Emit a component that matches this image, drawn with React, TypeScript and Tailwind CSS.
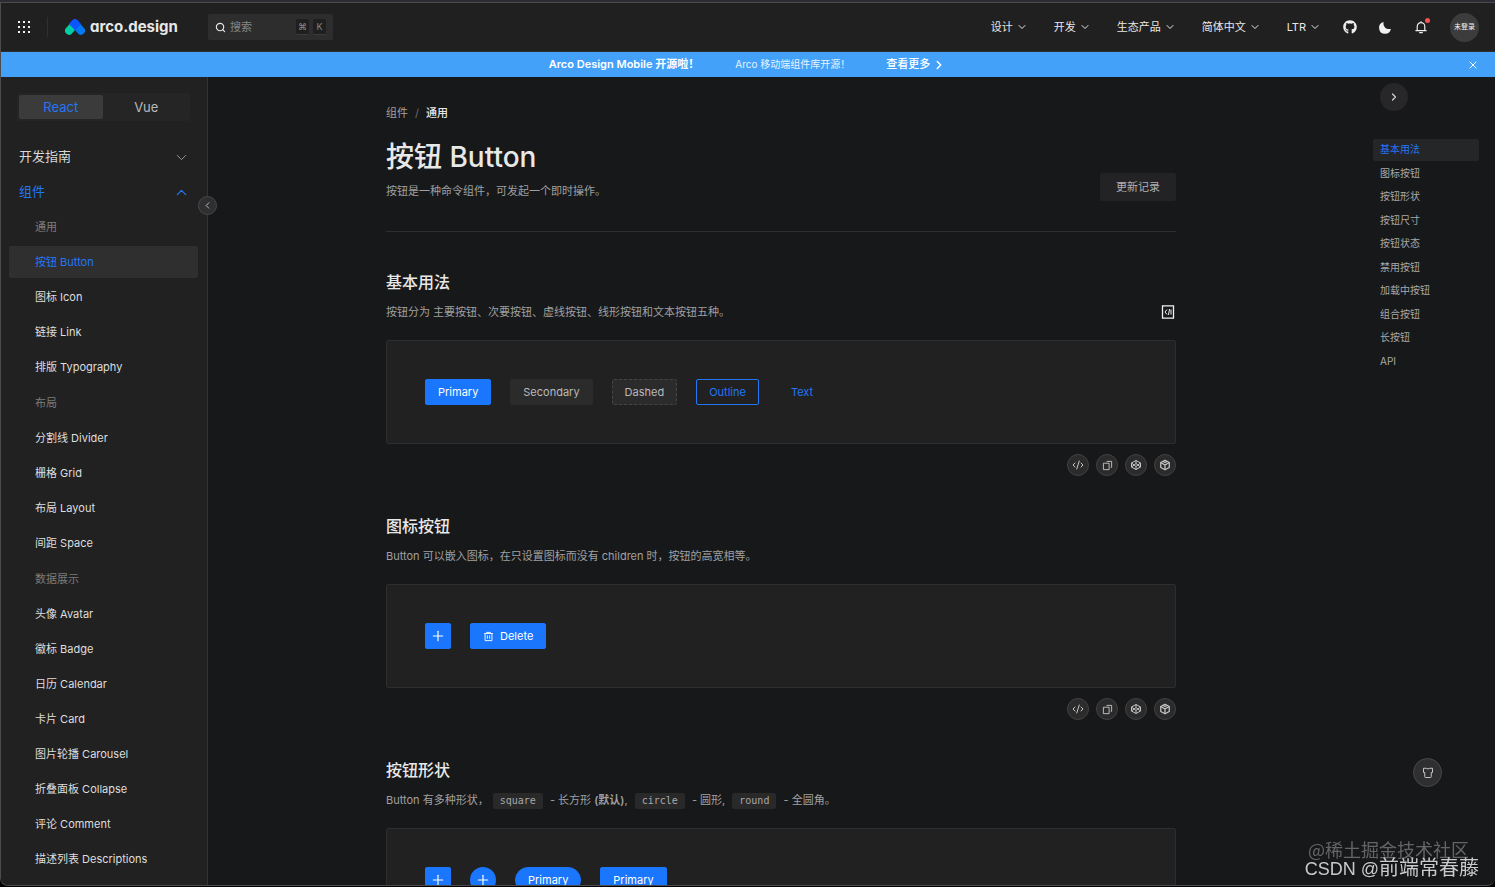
import { useState } from "react";
import type { ReactNode } from "react";
import {
  ChevronDown,
  ChevronLeft,
  ChevronRight,
  ChevronUp,
  CodeXml,
  Plus,
  Search,
  X,
} from "lucide-react";
import { FaGithub } from "react-icons/fa";

const navItems = ["设计", "开发", "生态产品", "简体中文", "LTR"];

const menuGroups = [
  {
    title: "通用",
    items: ["按钮 Button", "图标 Icon", "链接 Link", "排版 Typography"],
  },
  {
    title: "布局",
    items: ["分割线 Divider", "栅格 Grid", "布局 Layout", "间距 Space"],
  },
  {
    title: "数据展示",
    items: [
      "头像 Avatar",
      "徽标 Badge",
      "日历 Calendar",
      "卡片 Card",
      "图片轮播 Carousel",
      "折叠面板 Collapse",
      "评论 Comment",
      "描述列表 Descriptions",
    ],
  },
];

const anchors = [
  "基本用法",
  "图标按钮",
  "按钮形状",
  "按钮尺寸",
  "按钮状态",
  "禁用按钮",
  "加载中按钮",
  "组合按钮",
  "长按钮",
  "API",
];

const LogoMark = () => (
  <svg viewBox="0 0 60 48" className="w-5 h-4" fill="none">
    <path d="M12 35 24 22" stroke="#00cfa4" strokeWidth="24" strokeLinecap="round" />
    <path d="M48 35 36 22" stroke="#0079f2" strokeWidth="24" strokeLinecap="round" />
    <path d="M22 4c5-5 11-5 16 0l10 11-18 19L12 15Z" fill="#0b55ff" />
  </svg>
);

const GridDots = () => (
  <svg viewBox="0 0 13 13" className="w-[13px] h-[13px]" fill="#f0f0f0">
    {[0, 5, 10].map((y) =>
      [0, 5, 10].map((x) => <rect key={`${x}-${y}`} x={x} y={y} width="2" height="2" />)
    )}
  </svg>
);

const MoonIcon = () => (
  <svg viewBox="0 0 24 24" className="w-[13px] h-[13px]" fill="#f0f0f0">
    <path d="M8.5 2C6.8 9.5 13 16.5 22 14.5A11 11 0 1 1 8.5 2Z" />
  </svg>
);

const BellIcon = () => (
  <svg
    viewBox="0 0 48 48"
    className="w-[14px] h-[14px]"
    fill="none"
    stroke="#f0f0f0"
    strokeWidth="4"
  >
    <path d="M24 9c7.2 0 13 5.8 13 13v14H11V22c0-7.2 5.8-13 13-13Zm0 0V4M5 36.5h38M18 43.5h12" />
  </svg>
);

const CopyIcon = () => (
  <svg
    viewBox="0 0 48 48"
    className="w-[11px] h-[11px]"
    fill="none"
    stroke="currentColor"
    strokeWidth="4"
  >
    <path d="M20 6h22v26h-4M6 14h25v28H6Z" />
  </svg>
);

const CodePenIcon = () => (
  <svg
    viewBox="0 0 48 48"
    className="w-3 h-3"
    fill="none"
    stroke="currentColor"
    strokeWidth="4"
    strokeLinejoin="round"
  >
    <path d="M24 6 42 16v16L24 42 6 32V16Z" />
    <path d="M24 6v12l18 14M24 18 6 32M24 42V30L6 16M24 30l18-14" />
  </svg>
);

const CodeSandboxIcon = () => (
  <svg
    viewBox="0 0 48 48"
    className="w-3 h-3"
    fill="none"
    stroke="currentColor"
    strokeWidth="5"
    strokeLinejoin="round"
  >
    <path d="M24 5 41 14v20L24 43 7 34V14Z" />
    <path d="M7 14l17 10 17-10M24 24v19M15 9l9 5 9-5" />
  </svg>
);

const TrashIcon = () => (
  <svg
    viewBox="0 0 48 48"
    className="w-[11px] h-[11px]"
    fill="none"
    stroke="currentColor"
    strokeWidth="4"
  >
    <path d="M5 11h38M16 11V6h16v5M9 11v31h30V11M19 19v15M29 19v15" />
  </svg>
);

const ShirtIcon = () => (
  <svg
    viewBox="0 0 48 48"
    className="w-3 h-3"
    fill="none"
    stroke="currentColor"
    strokeWidth="4"
  >
    <path d="M6 5h11c2 3 12 3 14 0h11v17h-5v17c0 2-1 3-3 3H14c-2 0-3-1-3-3V22H6Z" />
  </svg>
);

const CodeBoxIcon = () => (
  <svg viewBox="0 0 14 14" className="w-[14px] h-[14px]" fill="none" stroke="#f2f2f2">
    <path d="M1.5.8h11v12.4h-11Z" strokeWidth="1.3" />
    <path d="M6 4.5 4 7l2 2.5M8.5 4l-1 6M10 4.5v5" strokeWidth="1" />
  </svg>
);

const buttonStyles = {
  primary: "border-[#1a76fc] bg-[#1a76fc] text-white",
  secondary: "border-[#2b2b2c] bg-[#2b2b2c] text-[#b9b9ba]",
  dashed: "border-dashed border-[#454546] bg-[#2b2b2c] text-[#b9b9ba]",
  outline: "border-[#2376f5] text-[#2376f5]",
  text: "border-transparent text-[#2376f5]",
};

const DemoButton = ({
  variant = "primary",
  rounded = "rounded-[2px]",
  children,
}: {
  variant?: keyof typeof buttonStyles;
  rounded?: string;
  children: ReactNode;
}) => (
  <button
    className={`flex items-center gap-1.5 h-[26px] px-3 border leading-4 ${rounded} ${buttonStyles[variant]}`}
  >
    {children}
  </button>
);

const PlusButton = ({ rounded = "rounded-[2px]" }: { rounded?: string }) => (
  <button
    aria-label="Plus"
    className={`flex items-center justify-center w-[26px] h-[26px] bg-[#1a76fc] text-white ${rounded}`}
  >
    <Plus size={16} strokeWidth={1.75} />
  </button>
);

const Code = ({ children }: { children: ReactNode }) => (
  <code className="inline-block h-4 mx-1 px-[7px] rounded-[2px] bg-[#29292a] align-middle text-[10px] leading-4 font-['DejaVu_Sans_Mono','Liberation_Mono',monospace] text-[#a8a8a9]">
    {children}
  </code>
);

const RoundAction = ({ label, children }: { label: string; children: ReactNode }) => (
  <button
    aria-label={label}
    className="flex items-center justify-center w-[22px] h-[22px] rounded-full border border-[#424244] bg-[#2b2b2c] text-[#c6c6c7]"
  >
    {children}
  </button>
);

const Demo = ({
  title,
  description,
  extra,
  children,
}: {
  title: string;
  description: ReactNode;
  extra?: ReactNode;
  children: ReactNode;
}) => (
  <section className="mb-[37px]">
    <h2 className="pt-px text-base leading-6 font-medium text-[#e8e8e8]">{title}</h2>
    <div className="flex items-center justify-between h-5 mt-2 pr-px text-[#a0a0a1]">
      <p className="leading-5">{description}</p>
      {extra}
    </div>
    <div className="flex gap-[19px] mt-[18px] p-[38px] rounded-[2px] border border-[#2e2e30] bg-[#212121]">
      {children}
    </div>
    <div className="flex justify-end gap-[7px] mt-2.5">
      <RoundAction label="Code">
        <CodeXml size={12} strokeWidth={2} />
      </RoundAction>
      <RoundAction label="Copy">
        <CopyIcon />
      </RoundAction>
      <RoundAction label="CodePen">
        <CodePenIcon />
      </RoundAction>
      <RoundAction label="CodeSandbox">
        <CodeSandboxIcon />
      </RoundAction>
    </div>
  </section>
);

const Header = () => (
  <header className="flex shrink-0 items-center justify-between h-[49px] pl-[17px] pr-4 border-b border-[#303031] bg-[#202020]">
    <div className="flex items-center">
      <button aria-label="Products">
        <GridDots />
      </button>
      <span className="w-px h-5 ml-4 mr-[17px] bg-[#303031]" />
      <a
        href="#"
        className="flex items-center gap-[5px] text-[15px] leading-6 font-bold text-[#e8e8e8] [font-feature-settings:'cv11']"
      >
        <LogoMark />
        arco.design
      </a>
      <label className="flex items-center w-[125px] h-[26px] ml-[30px] px-[7px] rounded-[2px] bg-[#2d2d2e]">
        <Search size={11} strokeWidth={2.5} className="shrink-0 text-[#e8e8e8]" />
        <input
          type="text"
          placeholder="搜索"
          aria-label="搜索"
          className="w-full min-w-0 ml-1 outline-none placeholder:text-[#858586]"
        />
        <span className="flex gap-1 text-[9px] text-[#858586]">
          <kbd className="flex items-center justify-center w-[13px] h-4 rounded-[2px] border-b border-[#3c3c3d] bg-[#1f1f20] font-['Inter','DejaVu_Sans',sans-serif]">
            ⌘
          </kbd>
          <kbd className="flex items-center justify-center w-[13px] h-4 rounded-[2px] border-b border-[#3c3c3d] bg-[#1f1f20] font-['Inter','DejaVu_Sans',sans-serif]">
            K
          </kbd>
        </span>
      </label>
    </div>

    <div className="flex items-center gap-[22px]">
      <nav className="flex items-center gap-[26px] text-[#e8e8e8]">
        {navItems.map((item) => (
          <button key={item} className="flex items-center gap-[3px]">
            {item}
            <ChevronDown size={12} strokeWidth={2} />
          </button>
        ))}
      </nav>
      <a href="#" aria-label="GitHub">
        <FaGithub size={14} color="#f0f0f0" />
      </a>
      <button aria-label="Theme">
        <MoonIcon />
      </button>
      <button aria-label="Notifications" className="relative">
        <BellIcon />
        <span className="absolute -top-0.5 -right-0.5 w-[5px] h-[5px] rounded-full bg-[#fa5252]" />
      </button>
      <button className="w-[29px] h-[29px] rounded-full bg-[#3c3c3c] text-[7px] whitespace-nowrap text-[#f5f5f5]">
        未登录
      </button>
    </div>
  </header>
);

const Banner = () => (
  <div className="flex shrink-0 items-center h-[25px] pr-4 bg-[#43a1f9] text-white">
    <div className="flex flex-1 items-center justify-center gap-9 pl-[27px]">
      <strong className="font-semibold">Arco Design Mobile 开源啦！</strong>
      <span className="text-[10px] text-[#e6f3ff]">Arco 移动端组件库开源！</span>
      <a href="#" className="flex items-center gap-0.5 font-medium">
        查看更多
        <ChevronRight size={14} strokeWidth={2.5} />
      </a>
    </div>
    <button aria-label="Close">
      <X size={12} strokeWidth={2} />
    </button>
  </div>
);

const Sidebar = () => {
  const [framework, setFramework] = useState("React");
  const [active, setActive] = useState("按钮 Button");

  return (
    <aside className="relative flex flex-col shrink-0 w-[207px] border-r border-[#333335] bg-[#212121]">
      <div className="flex gap-0.5 ml-4 mr-[17px] mt-4 mb-5 p-0.5 rounded-[2px] bg-[#252526] text-[13px]">
        {["React", "Vue"].map((name) => (
          <button
            key={name}
            onClick={() => setFramework(name)}
            className={`flex-1 h-6 rounded-[2px] leading-6 ${
              framework === name ? "bg-[#3b3b3c] text-[#2376f5]" : "text-[#b9b9ba]"
            }`}
          >
            {name}
          </button>
        ))}
      </div>

      <nav className="flex flex-col gap-[3px] pl-2 pr-[9px]">
        <button className="flex shrink-0 items-center justify-between h-8 pl-2.5 pr-2 text-[13px] text-[#d6d6d7]">
          开发指南
          <ChevronDown size={17} strokeWidth={1.25} className="text-[#a0a0a1]" />
        </button>
        <button className="flex shrink-0 items-center justify-between h-8 pl-2.5 pr-2 text-[13px] text-[#2376f5]">
          组件
          <ChevronUp size={17} strokeWidth={1.75} />
        </button>
        <div className="flex flex-col gap-1">
          {menuGroups.map((group) => (
            <div key={group.title} className="flex flex-col gap-[3px]">
              <div className="flex items-center h-8 pl-[26px] text-[#7c7c7d]">{group.title}</div>
              {group.items.map((item) => (
                <a
                  key={item}
                  href="#"
                  onClick={() => setActive(item)}
                  className={`flex items-center h-8 pl-[26px] rounded-[2px] ${
                    active === item ? "bg-[#2f2f30] text-[#2376f5]" : "text-[#dededf]"
                  }`}
                >
                  {item}
                </a>
              ))}
            </div>
          ))}
        </div>
      </nav>

      {/* Collapse handle, sits over the border */}
      <button
        aria-label="Collapse"
        className="absolute top-[119px] -right-2.5 z-10 flex items-center justify-center w-[19px] h-[19px] rounded-full border border-[#48484a] bg-[#2f2f31] text-[#c6c6c7]"
      >
        <ChevronLeft size={11} strokeWidth={2} />
      </button>
    </aside>
  );
};

const Toc = () => {
  const [current, setCurrent] = useState("基本用法");

  return (
    <aside className="shrink-0 w-[122px] pr-4 pt-1.5">
      <button
        aria-label="Hide anchors"
        className="flex items-center justify-center w-7 h-7 ml-[7px] rounded-full bg-[#272729] text-[#d0d0d1]"
      >
        <ChevronRight size={12} strokeWidth={2.5} />
      </button>
      <ul className="flex flex-col justify-between h-[234px] mt-7 text-[10px] text-[#a8a8a9]">
        {anchors.map((item) => (
          <li key={item}>
            <a
              href="#"
              onClick={() => setCurrent(item)}
              className={`block h-[22px] pl-[7px] rounded-[2px] leading-5 ${
                current === item ? "bg-[#252628] text-[#2376f5]" : ""
              }`}
            >
              {item}
            </a>
          </li>
        ))}
      </ul>
    </aside>
  );
};

export default function App() {
  return (
    <div className="flex flex-col h-screen overflow-hidden bg-black pb-px font-['Inter','Noto_Sans_CJK_SC',sans-serif] text-[11px]">
      <div className="shrink-0 h-0.5 bg-[#2b2b33]" />
      <div className="flex flex-col flex-1 min-h-0 overflow-hidden rounded-b-lg border-t border-l border-b border-[#4c4c4f] bg-[#17181a]">
        <Header />
        <Banner />
        <div className="flex flex-1 min-h-0">
          <Sidebar />
          <main className="flex flex-1 justify-center min-w-0 pr-[19px]">
            <div className="w-full max-w-[790px]">
              <div className="flex gap-[7px] mt-[26px] leading-5">
                <a href="#" className="text-[#a0a0a1]">
                  组件
                </a>
                <span className="text-[#6c6c6d]">/</span>
                <span className="font-medium text-[#e8e8e8]">通用</span>
              </div>
              <div className="flex items-end justify-between mb-[37px] pb-[30px] border-b border-[#2e2e30]">
                <div>
                  <h1 className="mt-4 text-[28px] leading-9 font-medium text-[#e8e8e8]">
                    按钮 Button
                  </h1>
                  <p className="mt-1.5 leading-5 text-[#a0a0a1]">
                    按钮是一种命令组件，可发起一个即时操作。
                  </p>
                </div>
                <button className="h-7 px-4 rounded-[2px] bg-[#232325] text-[#b0b0b1]">
                  更新记录
                </button>
              </div>

              <Demo
                title="基本用法"
                description="按钮分为 主要按钮、次要按钮、虚线按钮、线形按钮和文本按钮五种。"
                extra={<CodeBoxIcon />}
              >
                <DemoButton>Primary</DemoButton>
                <DemoButton variant="secondary">Secondary</DemoButton>
                <DemoButton variant="dashed">Dashed</DemoButton>
                <DemoButton variant="outline">Outline</DemoButton>
                <DemoButton variant="text">Text</DemoButton>
              </Demo>

              <Demo
                title="图标按钮"
                description="Button 可以嵌入图标，在只设置图标而没有 children 时，按钮的高宽相等。"
              >
                <PlusButton />
                <DemoButton>
                  <TrashIcon />
                  Delete
                </DemoButton>
              </Demo>

              <Demo
                title="按钮形状"
                description={
                  <>
                    Button 有多种形状，
                    <Code>square</Code> - 长方形 <b className="font-semibold">(默认)</b>,{" "}
                    <Code>circle</Code> - 圆形, <Code>round</Code> - 全圆角。
                  </>
                }
              >
                <PlusButton />
                <PlusButton rounded="rounded-full" />
                <DemoButton rounded="rounded-full">Primary</DemoButton>
                <DemoButton>Primary</DemoButton>
              </Demo>
            </div>
          </main>
          <Toc />
        </div>
      </div>

      {/* Theme button and watermarks float over the page */}
      <button
        aria-label="Theme store"
        className="fixed right-[53px] bottom-[100px] flex items-center justify-center w-[29px] h-[29px] rounded-full border border-[#48484a] bg-[#2f2f31] text-[#c6c6c7]"
      >
        <ShirtIcon />
      </button>
      <div className="fixed right-[26px] bottom-7 text-lg leading-5 font-['Noto_Sans_CJK_SC',sans-serif] text-[#656566]">
        @稀土掘金技术社区
      </div>
      <div className="fixed right-4 bottom-2 text-xl leading-5 font-['Liberation_Sans','Noto_Sans_CJK_SC',sans-serif] text-[#cacacb] text-shadow-md">
        <span className="text-lg leading-5">CSDN @</span>前端常春藤
      </div>
    </div>
  );
}
